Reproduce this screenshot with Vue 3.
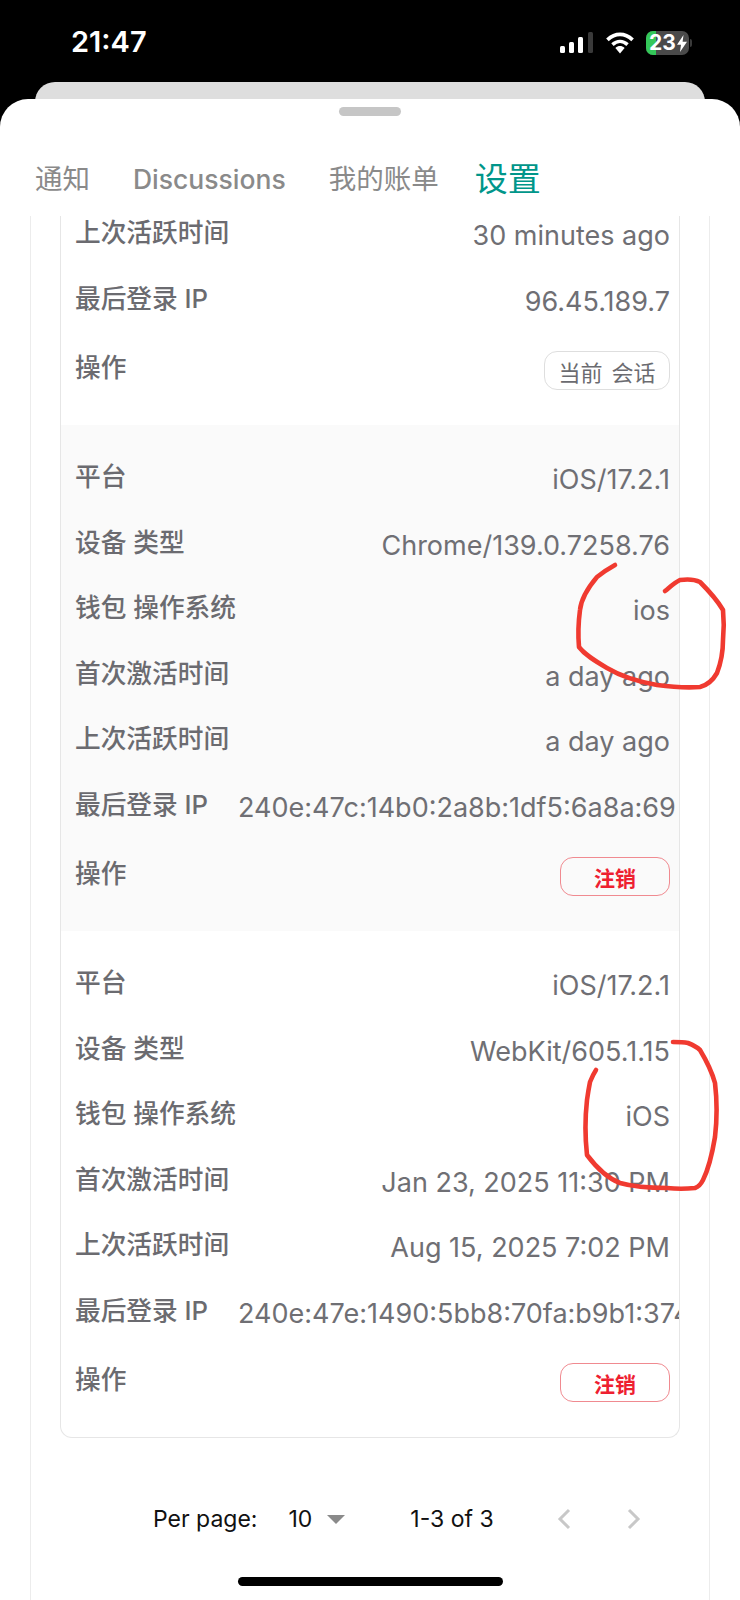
<script setup>
const tabs = [
  { name: '通知', gap: 43 },
  { name: 'Discussions', latin: true, gap: 43 },
  { name: '我的账单', gap: 36 },
  { name: '设置', active: true },
]

const sessions = [
  {
    id: 1,
    rows: [
      { label: '上次活跃时间', value: '30 minutes ago' },
      { label: '最后登录 IP', value: '96.45.189.7' },
    ],
    current: true,
  },
  {
    id: 2,
    striped: true,
    rows: [
      { label: '平台', value: 'iOS/17.2.1' },
      { label: '设备 类型', value: 'Chrome/139.0.7258.76' },
      { label: '钱包 操作系统', value: 'ios' },
      { label: '首次激活时间', value: 'a day ago' },
      { label: '上次活跃时间', value: 'a day ago' },
      { label: '最后登录 IP', value: '240e:47c:14b0:2a8b:1df5:6a8a:69', clip: true },
    ],
  },
  {
    id: 3,
    rows: [
      { label: '平台', value: 'iOS/17.2.1' },
      { label: '设备 类型', value: 'WebKit/605.1.15' },
      { label: '钱包 操作系统', value: 'iOS' },
      { label: '首次激活时间', value: 'Jan 23, 2025 11:30 PM' },
      { label: '上次活跃时间', value: 'Aug 15, 2025 7:02 PM' },
      { label: '最后登录 IP', value: '240e:47e:1490:5bb8:70fa:b9b1:374', clip: true },
    ],
  },
]
</script>

<template>
  <div class="phone">
    <div class="status">
      <span class="time">21:47</span>
      <div class="status-icons">
        <svg width="34" height="22" viewBox="0 0 34 22">
          <rect x="0" y="14" width="5" height="7" rx="1.5" fill="#fff" />
          <rect x="9" y="10" width="5" height="11" rx="1.5" fill="#fff" />
          <rect x="18" y="5" width="5" height="16" rx="1.5" fill="#fff" />
          <rect x="28" y="0" width="5" height="21" rx="1.5" fill="#3a3a3a" />
        </svg>
        <svg width="30" height="22" viewBox="0 0 28 21">
          <path d="M2 7.5C9.5 .6 18.5 .6 26 7.5" fill="none" stroke="#fff" stroke-width="3.6" />
          <path d="M6.8 12C11.3 8 16.7 8 21.2 12" fill="none" stroke="#fff" stroke-width="3.4" />
          <path d="M9.6 15.2C12.4 12.8 15.6 12.8 18.4 15.2L14 20.5Z" fill="#fff" />
        </svg>
        <div class="battery-wrap">
          <div class="battery">
            <span class="battery-fill"></span>
            <span class="battery-text">23</span>
            <svg width="10" height="17" viewBox="0 0 10 17" class="bolt">
              <path d="M6.5 0L0 9.8H4L3 17L10 6.8H5.6Z" fill="#fff" />
            </svg>
          </div>
          <span class="battery-nub"></span>
        </div>
      </div>
    </div>

    <div class="back-card"></div>

    <div class="sheet">
      <div class="handle"></div>
      <div class="tabs">
        <span
          v-for="tab in tabs"
          :key="tab.name"
          class="tab"
          :class="{ active: tab.active, latin: tab.latin }"
          :style="{ marginRight: (tab.gap || 0) + 'px' }"
        >{{ tab.name }}</span>
      </div>

      <div class="content">
        <div class="card">
          <div
            v-for="session in sessions"
            :key="session.id"
            class="session"
            :class="{ striped: session.striped }"
          >
            <div v-for="row in session.rows" :key="row.label" class="row">
              <span class="label">{{ row.label }}</span>
              <span class="value" :class="{ clip: row.clip }">{{ row.value }}</span>
            </div>
            <div class="row action">
              <span class="label">操作</span>
              <span v-if="session.current" class="btn current">当前 会话</span>
              <span v-else class="btn logout">注销</span>
            </div>
          </div>
        </div>

        <div class="pager">
          <span class="per-label">Per page:</span>
          <span class="per-value">10</span>
          <span class="caret"></span>
          <span class="range">1-3 of 3</span>
          <svg class="chev" width="16" height="22" viewBox="0 0 16 22">
            <path d="M13 2L4 11L13 20" fill="none" stroke="#c8c8c8" stroke-width="3" />
          </svg>
          <svg class="chev next" width="16" height="22" viewBox="0 0 16 22">
            <path d="M3 2L12 11L3 20" fill="none" stroke="#c8c8c8" stroke-width="3" />
          </svg>
        </div>
      </div>

      <div class="home-bar"></div>
    </div>

    <!-- red pen marks drawn over the screenshot -->
    <svg class="ink" width="740" height="1600" viewBox="0 0 740 1600">
      <path d="M615 565C606 570 602 573 597 577C586 590 581 600 580 610C578 625 578 636 579 647C585 655 595 661 607 668C622 677 640 682 657 685C672 687 686 688 700 687C708 685 713 680 717 673C722 660 723 650 723 640C724 630 724 620 723 610C716 598 708 590 700 582C694 579 687 579 680 580C674 583 670 587 665 591" />
      <path d="M673 1042C678 1042 683 1042 688 1043C693 1045 697 1047 700 1050C706 1060 712 1072 715 1083C717 1100 717 1120 715 1137C712 1155 708 1170 703 1180C701 1184 698 1187 695 1188C686 1189 676 1189 667 1188C650 1188 634 1187 620 1183C607 1178 596 1167 587 1155C585 1137 585 1118 587 1100C588 1093 589 1087 590 1082C592 1077 594 1073 596 1070" />
    </svg>
  </div>
</template>

<style scoped>
.phone {
  position: relative;
  width: 740px;
  height: 1600px;
  background: #000;
  overflow: hidden;
  display: flex;
  flex-direction: column;
  font-family: Inter, "Noto Sans CJK SC", sans-serif;
}

.status {
  height: 82px;
  flex-shrink: 0;
  display: flex;
  align-items: flex-start;
  justify-content: space-between;
  padding: 25px 50px 0 71px;
  box-sizing: border-box;
}

.time {
  color: #fff;
  font-size: 29px;
  font-weight: 600;
  line-height: 34px;
}

.status-icons {
  display: flex;
  align-items: center;
  gap: 11px;
  padding-top: 6px;
}

.battery-wrap {
  display: flex;
  align-items: center;
  gap: 1px;
  margin-right: -2px;
}

.battery {
  position: relative;
  width: 43px;
  height: 24px;
  border-radius: 7px;
  background: #4a4a4a;
  overflow: hidden;
  display: flex;
  align-items: center;
  padding-left: 3px;
  box-sizing: border-box;
}

.battery-nub {
  width: 2px;
  height: 8px;
  border-radius: 0 2px 2px 0;
  background: #3a3a3a;
}

.battery-fill {
  position: absolute;
  left: 0;
  top: 0;
  bottom: 0;
  width: 10px;
  background: #34c759;
}

.battery-text {
  position: relative;
  color: #fff;
  font-size: 21px;
  font-weight: 700;
  line-height: 24px;
}

.bolt {
  position: relative;
  margin-left: 1px;
}

.back-card {
  height: 40px;
  margin: 0 35px -23px;
  flex-shrink: 0;
  border-radius: 20px 20px 0 0;
  background: #dedede;
}

.sheet {
  position: relative;
  flex: 1;
  min-height: 0;
  border-radius: 28px 28px 0 0;
  background: #fff;
  display: flex;
  flex-direction: column;
}

.handle {
  width: 62px;
  height: 9px;
  margin: 8px auto 0;
  border-radius: 5px;
  background: #c6c6c6;
}

.tabs {
  height: 100px;
  flex-shrink: 0;
  display: flex;
  align-items: center;
  padding: 26px 35px 0;
  box-sizing: border-box;
}

.tab {
  color: #8a8a8a;
  font-size: 27.5px;
  font-weight: 400;
  line-height: 40px;
}

.tab.latin {
  font-size: 26.5px;
  font-weight: 500;
}

.tab.active {
  color: #00968a;
  font-size: 33px;
}

.content {
  flex: 1;
  min-height: 0;
  margin: 0 30px;
  padding: 0 29px;
  border-left: 1px solid #ececec;
  border-right: 1px solid #ececec;
}

.card {
  border: 1px solid #e6e6e6;
  border-top: 0;
  border-radius: 0 0 12px 12px;
  overflow: hidden;
}

.session {
  padding: 0 9px 34px 14px;
}

.session.striped {
  background: #fafafa;
}

.session:not(:first-child) {
  padding-top: 35px;
}

.row {
  display: flex;
  justify-content: space-between;
  height: 65.5px;
  gap: 30px;
}

.label {
  flex-shrink: 0;
  color: #6b6b70;
  font-size: 25.7px;
  font-weight: 500;
  line-height: 34px;
}

.value {
  color: #6f6f74;
  font-size: 27px;
  line-height: 40px;
  white-space: nowrap;
}

.value.clip {
  flex: 1;
  min-width: 0;
  margin-right: -9px;
  overflow: hidden;
}

.row.action {
  height: 40px;
  margin-top: 4px;
}

.btn {
  box-sizing: border-box;
  height: 39px;
  border-radius: 13px;
  display: flex;
  align-items: center;
  justify-content: center;
  font-size: 22px;
}

.btn.current {
  width: 126px;
  border: 1px solid #dedede;
  color: #6b6b70;
  word-spacing: 3px;
}

.btn.logout {
  width: 110px;
  border: 1px solid #f08a90;
  color: #ee2030;
  font-size: 21px;
  font-weight: 700;
}

.pager {
  display: flex;
  align-items: center;
  height: 40px;
  margin-top: 61px;
  padding-left: 93px;
  color: #111;
  font-size: 23px;
}

.per-value {
  margin-left: 31px;
}

.caret {
  width: 0;
  height: 0;
  margin-left: 15px;
  border-left: 9px solid transparent;
  border-right: 9px solid transparent;
  border-top: 9px solid #8a8a8a;
}

.range {
  margin-left: 65px;
}

.chev {
  margin-left: 62px;
}

.chev.next {
  margin-left: 54px;
}

.home-bar {
  position: absolute;
  left: 238px;
  bottom: 14px;
  width: 265px;
  height: 9px;
  border-radius: 5px;
  background: #000;
}

.ink {
  position: absolute;
  left: 0;
  top: 0;
  pointer-events: none;
}

.ink path {
  fill: none;
  stroke: #f03a30;
  stroke-width: 4.6;
  stroke-linecap: round;
  stroke-linejoin: round;
}
</style>

<style>
body {
  background: #000;
}
</style>
